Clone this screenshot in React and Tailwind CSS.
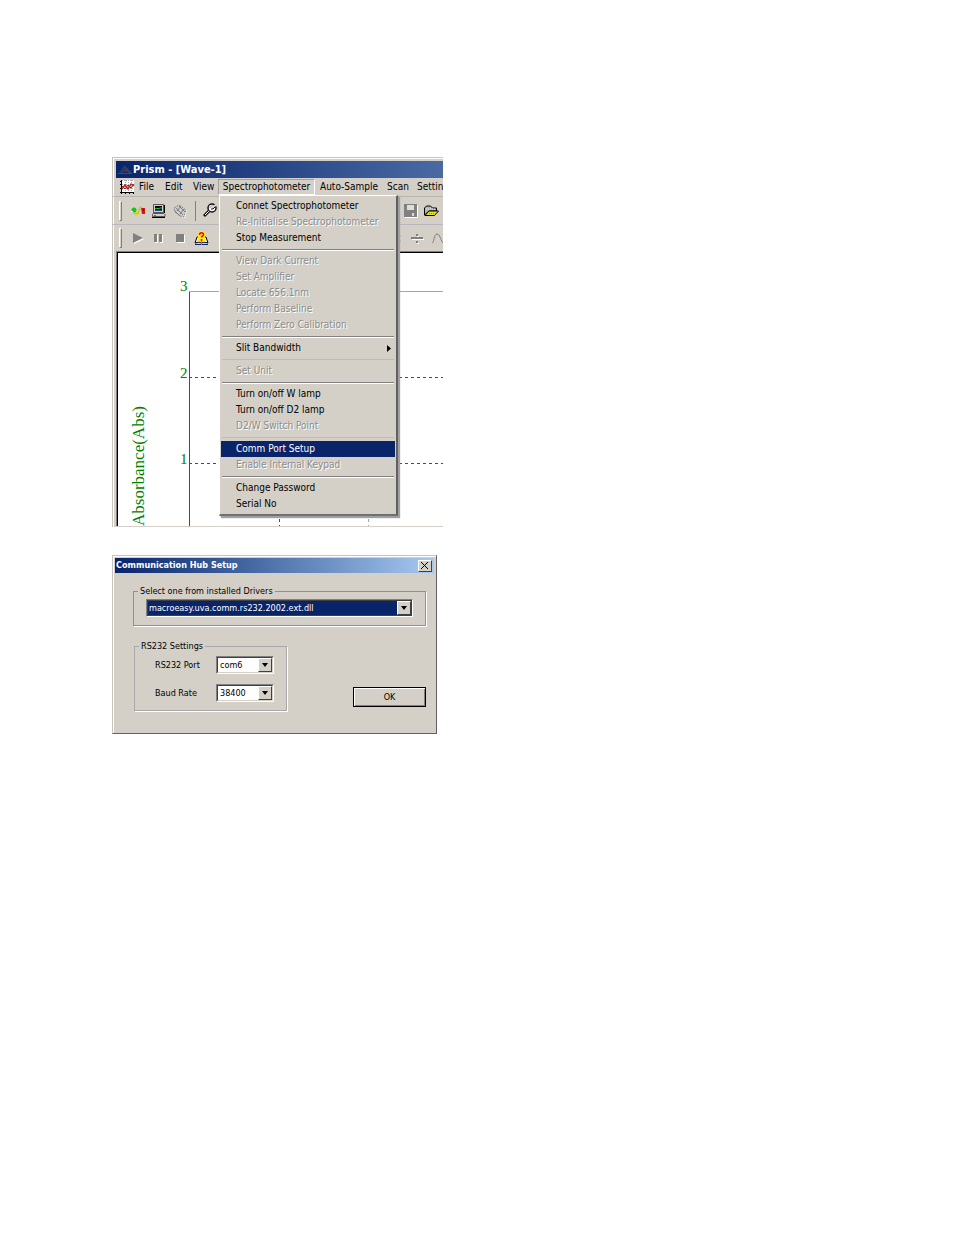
import React from 'react'

const menuGroups = [
  {
    items: [
      { label: 'Connet Spectrophotometer' },
      { label: 'Re-Initialise Spectrophotometer', disabled: true },
      { label: 'Stop Measurement' },
    ],
  },
  {
    items: [
      { label: 'View Dark Current', disabled: true },
      { label: 'Set Amplifier', disabled: true },
      { label: 'Locate 656.1nm', disabled: true },
      { label: 'Perform Baseline', disabled: true },
      { label: 'Perform Zero Calibration', disabled: true },
    ],
  },
  { items: [{ label: 'Slit Bandwidth', submenu: true }] },
  { faint: true, items: [{ label: 'Set Unit', disabled: true }] },
  {
    items: [
      { label: 'Turn on/off W lamp' },
      { label: 'Turn on/off D2 lamp' },
      { label: 'D2/W Switch Point', disabled: true },
    ],
  },
  {
    faint: true,
    items: [
      { label: 'Comm Port Setup', selected: true },
      { label: 'Enable Internal Keypad', disabled: true },
    ],
  },
  { items: [{ label: 'Change Password' }, { label: 'Serial No' }] },
]

const PrismLogo = () => (
  <svg width="15" height="12" viewBox="0 0 15 12" aria-hidden="true">
    <path d="M1 9 6 1l2 4-3 4z" fill="#173f63" />
    <path d="M6 1 14 9l-2 1-4-3z" fill="#2c4468" />
    <path d="M6 6h3v2H6z" fill="#6b2437" />
    <path d="M0 9h14v1H0z" fill="#18588c" />
  </svg>
)

const DocumentIcon = () => (
  <svg width="15" height="14" viewBox="0 0 15 14" aria-hidden="true">
    <path d="M2 0h12v12H2z" fill="#fff" />
    <path d="M5.500 0v12M8.500 0v12M11.500 0v12M2 .5h12M2 4.500h12M2 8.500h12" stroke="#aaa" strokeDasharray="1 1" fill="none" />
    <path d="M1.500 0v14M0 12.500h14" stroke="#000" fill="none" />
    <path d="M0 1.500h1M0 4.500h1M0 8.500h1M5.500 13v1M9.500 13v1M13.500 13v1" stroke="#000" fill="none" />
    <path d="M2 6l3 3 3-4 3 3 3-4" stroke="#444" fill="none" />
    <path d="M2 9l3-4 3 4 3-5 3 2" stroke="#d01818" strokeWidth="1.500" fill="none" />
  </svg>
)

const ConnectIcon = () => (
  <svg width="16" height="14" viewBox="0 0 16 14" aria-hidden="true">
    <circle cx="3" cy="6" r="2.500" fill="#20c020" />
    <path d="M0 7h2v1H0z" fill="#fff" />
    <path d="M3 9.500h4l1-3 1-3h2" stroke="#d8c400" strokeWidth="1.500" fill="none" />
    <path d="M4 11h3" stroke="#e8e000" strokeWidth="2" fill="none" />
    <path d="M10 4h4v6h-3z" fill="#d01818" />
    <path d="M12 5h1v2h-1z" fill="#600" />
  </svg>
)

const MonitorIcon = () => (
  <svg width="14" height="14" viewBox="0 0 14 14" aria-hidden="true">
    <path d="M1.500.5h10v8h-10z" fill="#d4d0c8" stroke="#555" />
    <path d="M3 2h7v5H3z" fill="#000" />
    <path d="M3 5l2-1 1 1 2-1h2" stroke="#20e020" fill="none" />
    <path d="M3 6.500h7" stroke="#2040b0" />
    <path d="M1 9.500h11l1 1v2H.5v-2z" fill="#d4d0c8" stroke="#555" />
    <path d="M0 13.500h13M12.500 1v8" stroke="#000" />
    <path d="M2 11.500h2" stroke="#20a020" />
  </svg>
)

const InitialiseIcon = () => (
  <svg width="15" height="14" viewBox="0 0 15 14" aria-hidden="true">
    <path d="M2 5 7 2l7 4-2 8-4-1-5-4z" fill="#fff" />
    <path d="M1 4 6 1l7 5-2 7-4-1-5-4z" fill="#ccc" stroke="#808080" strokeDasharray="2 1" />
    <path d="M3 4l7 7M6 2l6 6M2 7l5 5M4 7l4-5M7 10l4-5" stroke="#808080" />
  </svg>
)

const WrenchIcon = () => (
  <svg width="15" height="15" viewBox="0 0 15 15" aria-hidden="true">
    <path d="M1 13 6 8" stroke="#111" strokeWidth="3" />
    <path d="M2 12 7 7" stroke="#fff" />
    <circle cx="9" cy="5" r="4" fill="#fff" stroke="#111" strokeWidth="1.500" />
    <path d="M7 5c0-2 3-3 5-1" stroke="#888" fill="none" />
    <path d="M9 5l5-4" stroke="#d4d0c8" strokeWidth="2" />
    <path d="M8 6h2l2-2" stroke="#111" fill="none" />
  </svg>
)

const HelpBookIcon = () => (
  <svg width="15" height="15" viewBox="0 0 15 15" aria-hidden="true">
    <path d="M1 12 3 6h9l2 6-4-1-2.500 1L5 11z" fill="#fff" stroke="#000" />
    <path d="M7.500 0C4 0 3.500 3 4 5L3 11c2-1 3-1 4.500 1C9 10 10 10 12 11l-1-6c.5-2 0-5-3.500-5z" fill="#ffe820" />
    <path d="M7.500 8v5" stroke="#a89000" />
    <path d="M1 13.500h6l.5.5.5-.5h6" stroke="#102080" fill="none" />
    <path d="M5.500 4c0-3 4-3 4-.5 0 2-2 1.500-2 3M7.500 8v2" fill="none" stroke="#e01010" strokeWidth="1.500" />
  </svg>
)

const SaveIcon = () => (
  <svg width="14" height="14" viewBox="0 0 14 14" shapeRendering="crispEdges" aria-hidden="true">
    <path d="M1 1h13v13H1z" fill="#fff" />
    <path d="M0 0h13v13H0z" fill="#808080" />
    <path d="M3 1h7v5H3zM8 9h2v3H8z" fill="#e0ddd5" />
  </svg>
)

const FolderIcon = () => (
  <svg width="15" height="12" viewBox="0 0 15 12" aria-hidden="true">
    <path d="M.5 10V3l2-2h4l2 2h4v3H5z" fill="#b4b4b4" stroke="#000" />
    <path d="M2 4h9" stroke="#eee" strokeDasharray="1 1" />
    <path d="M1 10.500 5 6h9.500l-4 4.500z" fill="#e8e020" stroke="#000" />
    <path d="M5 8.500h6" stroke="#777" strokeDasharray="1 1" />
  </svg>
)

const Separator = ({ faint }) => (
  <div
    className={
      faint
        ? 'mx-px mt-[3px] mb-0.5 h-0.5 border-t border-[#bebcb8]'
        : 'mx-px mt-[3px] mb-0.5 h-0.5 border-t border-b border-t-[#808080] border-b-white'
    }
  />
)

const MenuItem = ({ label, disabled, selected, submenu }) => (
  <button
    type="button"
    role="menuitem"
    disabled={disabled}
    className={
      selected
        ? 'flex h-4 w-full items-center bg-[#0a246a] pl-[15px] text-left whitespace-nowrap text-white'
        : disabled
          ? 'flex h-4 w-full items-center pl-[15px] text-left whitespace-nowrap text-[#8c8c8c] [text-shadow:1px_1px_0_#fff]'
          : 'flex h-4 w-full items-center pl-[15px] text-left whitespace-nowrap text-black'
    }
  >
    {label}
    {submenu && (
      <svg width="4" height="7" viewBox="0 0 4 7" className="mr-1 ml-auto" aria-hidden="true">
        <path d="M0 0v7l4-3.500z" fill="#000" />
      </svg>
    )}
  </button>
)

const SpectrophotometerMenu = () => (
  <div
    role="menu"
    className="absolute top-[37px] left-[106px] z-10 w-[179px] border-t border-r-2 border-b-2 border-l border-t-white border-r-[#606060] border-b-[#707070] border-l-white bg-[#d4d0c8] px-px pt-0.5 pb-0.5 shadow-[2px_2px_1px_#a0a0a0]"
  >
    {menuGroups.map((group, index) => (
      <React.Fragment key={group.items[0].label}>
        {index > 0 && <Separator faint={group.faint} />}
        {group.items.map((item) => (
          <MenuItem key={item.label} {...item} />
        ))}
      </React.Fragment>
    ))}
  </div>
)

const MenuBar = () => (
  <nav className="flex h-[18px] items-center whitespace-nowrap *:shrink-0">
    <span className="ml-[7px] w-[19px]"><DocumentIcon /></span>
    <button type="button" className="w-[26px] text-left">File</button>
    <button type="button" className="w-7 text-left">Edit</button>
    <button type="button" className="w-[25px] text-left">View</button>
    <button type="button" className="h-4 w-[97px] border border-t-[#a0a0a0] border-r-white border-b-white border-l-[#a0a0a0] text-center">
      Spectrophotometer
    </button>
    <button type="button" className="w-[72px] pl-[5px] text-left">Auto-Sample</button>
    <button type="button" className="w-[30px] text-left">Scan</button>
    <button type="button" className="text-left">Settin</button>
  </nav>
)

const Grip = () => <span className="mr-[9px] ml-1.5 h-5 w-[3px] border border-t-white border-r-[#808080] border-b-[#808080] border-l-white" />

const ToolButton = ({ label, className, children }) => (
  <button type="button" aria-label={label} className={className}>{children}</button>
)

const Toolbars = () => (
  <div>
    <div className="flex h-7 items-center border-t border-[#b8b5ae] *:shrink-0">
      <Grip />
      <ToolButton label="Connect" className="w-[21px]"><ConnectIcon /></ToolButton>
      <ToolButton label="Monitor" className="w-[21px]"><MonitorIcon /></ToolButton>
      <ToolButton label="Initialise" className="w-[22px]"><InitialiseIcon /></ToolButton>
      <span className="mr-[7px] h-5 w-px bg-[#808080]" />
      <ToolButton label="Settings" className="w-[201px]"><WrenchIcon /></ToolButton>
      <ToolButton label="Save" className="w-5"><SaveIcon /></ToolButton>
      <ToolButton label="Open" className="w-5"><FolderIcon /></ToolButton>
    </div>
    <div className="flex h-[27px] items-center border-t border-[#b8b8bc] *:shrink-0">
      <Grip />
      <ToolButton label="Play" className="w-[23px] pl-px">
        <svg width="12" height="11" viewBox="0 0 12 11"><path d="M2 1v10l10-5z" fill="#fff" /><path d="M1 0v10l10-5z" fill="#808080" /></svg>
      </ToolButton>
      <ToolButton label="Pause" className="w-[22px]">
        <svg width="10" height="9" viewBox="0 0 10 9"><path d="M1 1h3v8H1zM6 1h3v8H6z" fill="#fff" /><path d="M0 0h3v8H0zM5 0h3v8H5z" fill="#808080" /></svg>
      </ToolButton>
      <ToolButton label="Stop" className="w-[18px]">
        <svg width="9" height="9" viewBox="0 0 9 9"><path d="M1 1h8v8H1z" fill="#fff" /><path d="M0 0h8v8H0z" fill="#808080" /></svg>
      </ToolButton>
      <ToolButton label="Help" className="w-[195px]"><HelpBookIcon /></ToolButton>
      <ToolButton label="Multiply" className="w-[22px]">
        <svg width="12" height="9" viewBox="0 0 12 9"><path d="M4 1l7 7M11 1 4 8" stroke="#808080" strokeWidth="2" /></svg>
      </ToolButton>
      <ToolButton label="Divide" className="w-[21px]">
        <svg width="13" height="11" viewBox="0 0 13 11"><path d="M1 6.500h12M6 3.500h2M6 10.500h2" stroke="#fff" /><path d="M0 5h12M5 2h2M5 9h2" stroke="#808080" strokeWidth="2" /></svg>
      </ToolButton>
      <ToolButton label="Curve" className="w-3">
        <svg width="12" height="11" viewBox="0 0 12 11"><path d="M0 10c2 0 2-9 5-9s3 5 6 9" stroke="#808080" fill="none" /></svg>
      </ToolButton>
    </div>
  </div>
)

const Chart = () => (
  <div className="ml-[3px] border-t border-l border-[#808080]">
    <div className="border-t border-l border-black bg-white">
      <svg viewBox="0 0 325 273" className="block w-full" role="img" aria-label="Absorbance chart">
        <g fill="none" stroke="#008000">
          <path d="M71.500 38v235" />
          <path d="M71 38.500h254" stroke="#80c080" />
          <path d="M71 124.500h254M71 210.500h254" strokeDasharray="3 3" />
          <path d="M161.500 38v235" strokeDasharray="3 3" />
          <path d="M250.500 38v235" stroke="#80c080" strokeDasharray="3 3" />
        </g>
        <g fill="#008000" fontFamily="Liberation Serif, serif">
          <g fontSize="15">
            <text x="62" y="38">3</text>
            <text x="62" y="125">2</text>
            <text x="62" y="211">1</text>
          </g>
          <text transform="translate(26 273) rotate(-90)" fontSize="17">Absorbance(Abs)</text>
        </g>
      </svg>
    </div>
  </div>
)

const PrismWindow = () => (
  <section className="relative h-[370px] w-[331px] overflow-hidden border-t border-l border-[#c8c4bc] bg-[#d4d0c8] shadow-[inset_1px_1px_0_#fff]">
    <header className="mt-[3px] ml-[3px] flex h-[17px] items-center bg-linear-to-r from-[#0a246a] to-[#4a6aa4] pl-0.5 text-[11px] font-bold text-white">
      <PrismLogo />
      <h1>Prism - [Wave-1]</h1>
    </header>
    <MenuBar />
    <Toolbars />
    <Chart />
    <SpectrophotometerMenu />
  </section>
)

const DropDown = ({ id, value, highlighted, className }) => (
  <div className={`relative border border-t-[#808080] border-r-white border-b-white border-l-[#808080] bg-white ${className}`}>
    <select
      id={id}
      defaultValue={value}
      className={
        highlighted
          ? 'block h-full w-full appearance-none border border-[#404040] bg-[#0a246a] pl-px text-white outline-none'
          : 'block h-full w-full appearance-none border border-t-[#404040] border-r-[#d4d0c8] border-b-[#d4d0c8] border-l-[#404040] bg-white pl-0.5 outline-none'
      }
    >
      <option>{value}</option>
    </select>
    <span className="pointer-events-none absolute top-px right-px bottom-px flex w-3.5 items-center justify-center border border-t-white border-r-[#404040] border-b-[#404040] border-l-white bg-[#d4d0c8]">
      <svg width="6" height="4" viewBox="0 0 6 4" aria-hidden="true"><path d="M0 0h6L3 4z" /></svg>
    </span>
  </div>
)

const HubSetupDialog = () => (
  <section className="h-[179px] w-[325px] border border-t-[#c8c4bc] border-r-[#606060] border-b-[#606060] border-l-[#c8c4bc] bg-[#d4d0c8] text-[9px] shadow-[inset_1px_1px_0_#fff]">
    <header className="mx-0.5 mt-0.5 flex h-[15px] items-center justify-between bg-linear-to-r from-[#0a246a] to-[#a6caf0] pr-0.5 pl-px font-bold text-white">
      <h2>Communication Hub Setup</h2>
      <button type="button" aria-label="Close" className="flex h-3 w-3.5 items-center justify-center border border-t-white border-r-[#404040] border-b-[#404040] border-l-white bg-[#d4d0c8]">
        <svg width="8" height="7" viewBox="0 0 8 7"><path d="M0 0l7 7M7 0 0 7" stroke="#000" /></svg>
      </button>
    </header>
    <fieldset className="mt-3 mr-2.5 ml-5 h-[41px] border border-[#909090] px-3 shadow-[1px_1px_0_#fff]">
      <legend className="-ml-2 px-0.5 leading-3">
        <label htmlFor="driver">Select one from installed Drivers</label>
      </legend>
      <DropDown id="driver" value="macroeasy.uva.comm.rs232.2002.ext.dll" highlighted className="mt-0.5 h-[18px] w-full" />
    </fieldset>
    <div className="mt-3.5 mr-2.5 ml-[21px] flex items-end justify-between">
      <fieldset className="h-[71px] w-[153px] border border-[#a8a8a8] pl-5 shadow-[1px_1px_0_#fff]">
        <legend className="-ml-4 px-0.5 leading-3">RS232 Settings</legend>
        <div className="mt-1 flex h-[18px] items-center">
          <label htmlFor="port" className="w-[61px]">RS232 Port</label>
          <DropDown id="port" value="com6" className="h-[18px] w-[58px]" />
        </div>
        <div className="mt-2.5 flex h-[18px] items-center">
          <label htmlFor="baud" className="w-[61px]">Baud Rate</label>
          <DropDown id="baud" value="38400" className="h-[18px] w-[58px]" />
        </div>
      </fieldset>
      <button type="button" className="mb-1 h-5 w-[73px] border border-black bg-[#d4d0c8] shadow-[inset_1px_1px_0_#fff,inset_-1px_-1px_0_#808080]">
        OK
      </button>
    </div>
  </section>
)

const App = () => (
  <main className="min-h-screen bg-white pt-[157px] pl-28 font-['DejaVu_Sans_Condensed','DejaVu_Sans',sans-serif] text-[10px] leading-none text-black">
    <PrismWindow />
    <div className="mt-7">
      <HubSetupDialog />
    </div>
  </main>
)

export default App
